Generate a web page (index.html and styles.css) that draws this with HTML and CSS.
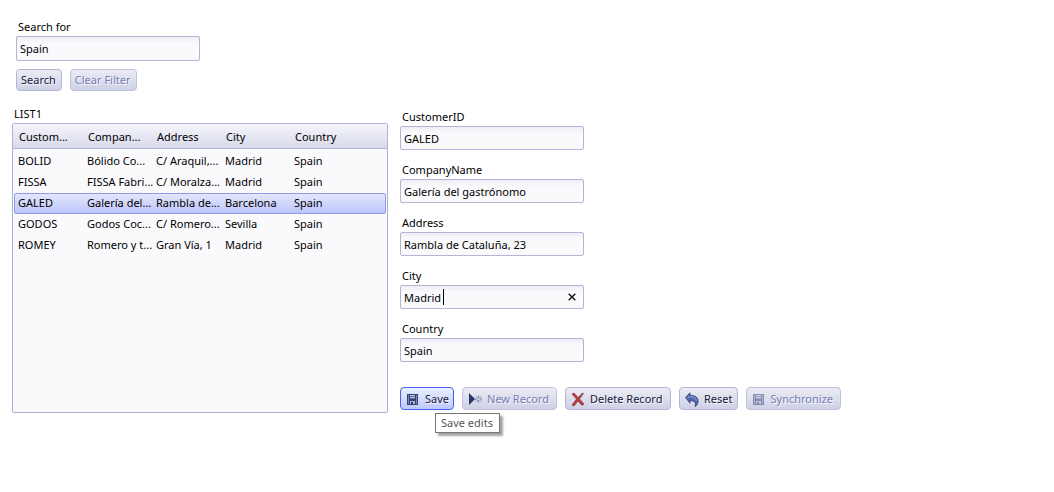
FILE: index.html
```
<!DOCTYPE html>
<html lang="en">
<head>
<meta charset="utf-8">
<title>Customers</title>
<link rel="stylesheet" href="styles.css">
</head>
<body>
<svg class="defs" width="0" height="0" aria-hidden="true">
  <defs>
    <symbol id="disk" viewBox="0 0 12 12">
      <path fill="#38446f" d="M0 0h11v11H0z"/>
      <path fill="#7887b8" d="M1 1h1v9H1zM9 1h1v9H9z"/>
      <path fill="#c3cceb" d="M3 1h5v4H3z"/>
      <path fill="#596897" d="M3 2h5v1H3zM3 4h5v1H3z"/>
      <path fill="#aab6df" d="M3 7h5v3H3z"/>
      <path fill="#303b68" d="M4 8h2v3H4z"/>
    </symbol>
  </defs>
</svg>
<main class="page">
  <section class="browse">
    <form class="search">
      <label class="label" for="query">Search for</label>
      <input class="input query" id="query" type="text" value="Spain">
      <div class="search-actions">
        <button class="button small" type="button">Search</button>
        <button class="button small" type="button" disabled>Clear Filter</button>
      </div>
    </form>
    <h2 class="list-title" id="list-title">LIST1</h2>
    <div class="list">
      <table class="table" aria-labelledby="list-title">
        <thead>
          <tr><th>Custom...</th><th>Compan...</th><th>Address</th><th>City</th><th>Country</th></tr>
        </thead>
        <tbody>
          <tr><td>BOLID</td><td>Bólido Co...</td><td>C/ Araquil,...</td><td>Madrid</td><td>Spain</td></tr>
          <tr><td>FISSA</td><td>FISSA Fabri...</td><td>C/ Moralza...</td><td>Madrid</td><td>Spain</td></tr>
          <tr class="selected"><td>GALED</td><td>Galería del...</td><td>Rambla de...</td><td>Barcelona</td><td>Spain</td></tr>
          <tr><td>GODOS</td><td>Godos Coc...</td><td>C/ Romero...</td><td>Sevilla</td><td>Spain</td></tr>
          <tr><td>ROMEY</td><td>Romero y t...</td><td>Gran Vía, 1</td><td>Madrid</td><td>Spain</td></tr>
        </tbody>
      </table>
    </div>
  </section>
  <form class="record">
    <div class="fields">
      <div class="field"><label class="label" for="customer">CustomerID</label><input class="input" id="customer" type="text" value="GALED"></div>
      <div class="field"><label class="label" for="company">CompanyName</label><input class="input" id="company" type="text" value="Galería del gastrónomo"></div>
      <div class="field"><label class="label" for="address">Address</label><input class="input" id="address" type="text" value="Rambla de Cataluña, 23"></div>
      <div class="field"><label class="label" for="city">City</label>
        <div class="editing"><input class="input" id="city" type="text" value="Madrid"><span class="caret"></span>
          <button class="clear" type="button" aria-label="Clear"><svg width="8" height="8" viewBox="0 0 8 8"><path d="M.7.7l6.600 6.600M7.300.7L.7 7.300" stroke="#111" stroke-width="1.400"/></svg></button>
        </div>
      </div>
      <div class="field"><label class="label" for="country">Country</label><input class="input" id="country" type="text" value="Spain"></div>
    </div>
    <div class="toolbar">
      <div class="save">
        <button class="button active" type="button" aria-describedby="tip"><svg class="icon" viewBox="0 0 16 16"><use href="#disk" x="2" y="3" width="12" height="12"/></svg>Save</button>
        <span class="tooltip" id="tip" role="tooltip">Save edits</span>
      </div>
      <button class="button wide" type="button" disabled><svg class="icon" viewBox="0 0 16 16"><path fill="#28346c" d="M2 2l6 6-6 6z"/><path stroke="#7482b5" d="M11.500 4.500v7M8 8h7M9 5.500l5 5M14 5.500l-5 5"/><circle cx="11.500" cy="8" r="1.200" fill="#d9dcec"/></svg>New Record</button>
      <button class="button widest" type="button"><svg class="icon" viewBox="0 0 16 16"><path fill="#b83b3c" stroke="#792b38" stroke-width=".6" d="M2 3l2-1 4 4.500L12.500 2l1 .5L9.500 8l4.500 5-2 1.500L8 10l-4 5-2-1 4.500-6z"/></svg>Delete Record</button>
      <button class="button" type="button"><svg class="icon" viewBox="0 0 16 16"><path fill="#5266aa" stroke="#303d72" stroke-width=".8" d="M1.500 6.500L6 1.800v2.700c6-.2 8.500 2.500 8 6.500-.2 2-1.200 3.700-3 4.500 1-3.500.5-6-5-5.800v2.500z"/><path fill="none" stroke="#9cadea" stroke-width="1" d="M3.500 6.500c4-1.500 8-.8 9 3"/></svg>Reset</button>
      <button class="button wide" type="button" disabled><svg class="icon faded" viewBox="0 0 16 16"><use href="#disk" x="2" y="3" width="12" height="12"/></svg>Synchronize</button>
    </div>
  </form>
</main>
</body>
</html>
```
FILE: styles.css
```
* { box-sizing: border-box; }
body {
  margin: 0;
  background: #fff;
  color: #000;
  font: 11px/16px "Noto Sans", "Open Sans", sans-serif;
}
input, button { font: inherit; color: inherit; }
.defs { display: block; }
.page {
  display: flex;
  align-items: flex-start;
  gap: 12px;
  min-height: 100vh;
  padding: 19px 12px;
}
.browse { flex: 0 1 376px; min-width: 0; }
.search { width: 188px; padding-left: 4px; }
.label { display: block; margin-bottom: 1px; padding-left: 2px; }
.input {
  display: block;
  width: 100%;
  height: 24px;
  padding: 0 3px;
  border: 1px solid #b1b6d8;
  border-radius: 2px;
  outline: 0;
  background: linear-gradient(#ededf3, #fafafd 6px);
}
.query { height: 25px; }
.search-actions { display: flex; gap: 8px; margin-top: 8px; }
.button {
  display: flex;
  align-items: center;
  gap: 4px;
  height: 23px;
  padding: 0 4px;
  border: 1px solid #b2b5d7;
  border-radius: 4px;
  background: linear-gradient(#ebecf4, #ced1e6);
  color: #15183a;
  text-shadow: 1px 1px 0 #f7f8ff;
  white-space: nowrap;
}
.button.small { height: 22px; padding: 0 5px 0 4px; }
.button.wide { min-width: 95px; }
.button.widest { min-width: 106px; }
.button:disabled { color: #777eb5; border-color: #bec1dc; }
.button.active {
  border-color: #4663ef;
  background: linear-gradient(#eaf0ff, #bdc8fb);
}
.icon { width: 16px; height: 16px; flex: none; }
.faded { opacity: .5; }
.list-title { margin: 15px 0 1px; padding-left: 2px; font: inherit; }
.list {
  min-height: 290px;
  border: 1px solid #adb2d3;
  border-radius: 2px;
  background: #fafafd;
}
.table, thead, tbody { display: block; }
tr {
  display: grid;
  grid-template-columns: repeat(4, 69px) 1fr;
}
th, td { padding: 0; text-align: left; white-space: nowrap; }
thead tr {
  height: 25px;
  padding: 5px 6px 0;
  border-bottom: 1px solid #adb2d3;
  background: linear-gradient(#f5f5fa, #d8daea);
}
th { font-weight: 400; }
tbody { padding: 2px 1px; }
tbody tr {
  height: 21px;
  padding: 1px 3px;
  border: 1px solid transparent;
  border-radius: 2px;
}
tbody .selected {
  border-color: #929be9;
  background: linear-gradient(#e3e6fc, #bdc5fa);
}
.record { display: flex; flex-direction: column; padding-top: 90px; }
.fields { display: flex; flex-direction: column; gap: 12px; width: 184px; }
.editing { position: relative; }
.caret {
  position: absolute;
  top: 4px;
  left: 43px;
  width: 1px;
  height: 16px;
  background: #000;
}
.clear {
  position: absolute;
  top: 4px;
  right: 4px;
  display: grid;
  place-items: center;
  width: 16px;
  height: 16px;
  padding: 0;
  border: 0;
  background: none;
}
.toolbar { display: flex; gap: 8px; margin-top: 25px; }
.save { position: relative; }
.tooltip {
  position: absolute;
  top: 26px;
  left: 35px;
  padding: 1px 6px 1px 5px;
  border: 1px solid #767676;
  background: #fff;
  box-shadow: 3px 3px 2px #a4a4a4;
  color: #575757;
  white-space: nowrap;
}
```
